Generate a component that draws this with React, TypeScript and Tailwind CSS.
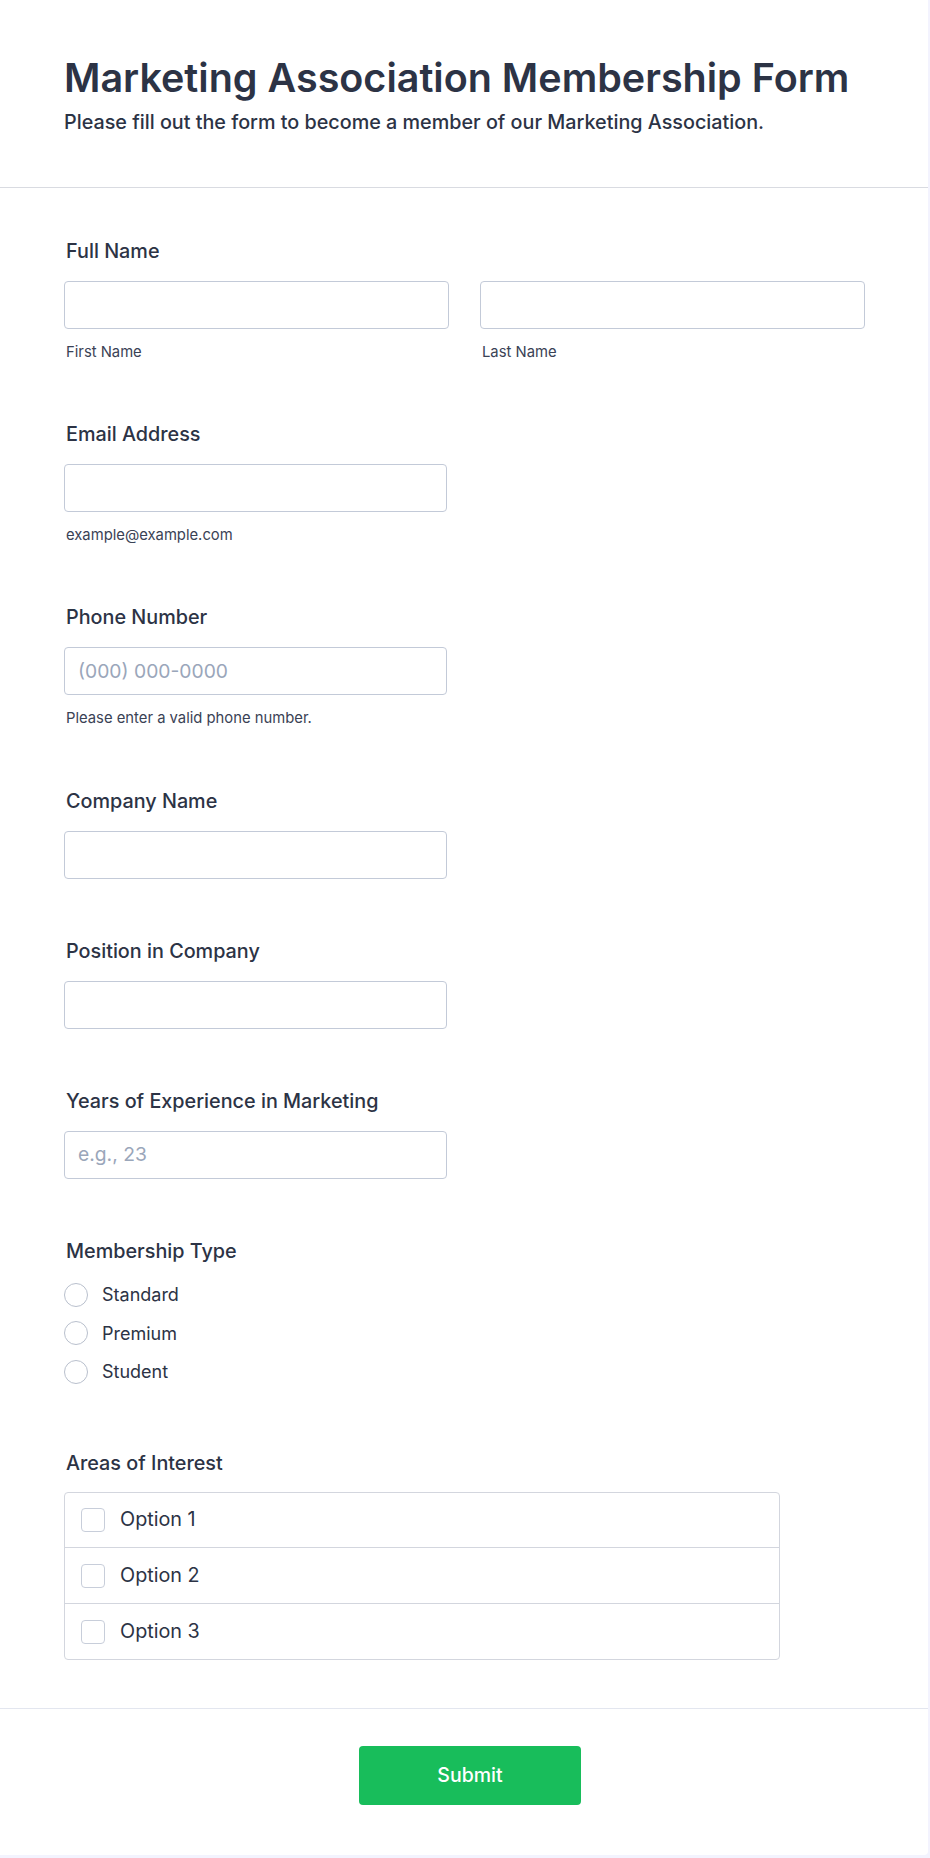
import React from 'react';

const font = { fontFamily: 'Inter, "Noto Sans", sans-serif' };

function Label({ children }: { children: React.ReactNode }) {
  return <div className="h-6 pl-[2px] text-[19.8px] leading-6 font-medium text-[#2c3345]">{children}</div>;
}

function Input({ width, placeholder }: { width: string; placeholder?: string }) {
  return (
    <div className={`${width} h-12 rounded-[4px] border border-[#c3cad8] bg-white flex items-center px-[13px]`}>
      {placeholder && <span className="text-[19.3px] text-[#9aa6ba]">{placeholder}</span>}
    </div>
  );
}

function Sub({ children }: { children: React.ReactNode }) {
  return <div className="mt-[13px] h-5 pl-[2px] text-[14.8px] leading-5 text-[#3a4255]">{children}</div>;
}

function Field({ label, sub, placeholder }: { label: string; sub?: string; placeholder?: string }) {
  return (
    <div>
      <Label>{label}</Label>
      <div className="mt-[18px]">
        <Input width="w-[383px]" placeholder={placeholder} />
      </div>
      {sub && <Sub>{sub}</Sub>}
    </div>
  );
}

export default function App() {
  const radios = ['Standard', 'Premium', 'Student'];
  const options = ['Option 1', 'Option 2', 'Option 3'];

  return (
    <div className="w-[930px] h-[1858px] bg-[#f3f3fe]" style={font}>
      <div className="w-[928px] h-[1855px] bg-white rounded-br-[4px]">
        {/* header */}
        <div className="px-16 pt-[54px] pb-[53px] border-b border-[#d9dbe1]">
          <h1 className="text-[39.5px] leading-[48px] font-semibold text-[#2c3345]">
            Marketing Association Membership Form
          </h1>
          <p className="mt-[8px] text-[19.75px] leading-6 font-medium text-[#2c3345]">
            Please fill out the form to become a member of our Marketing Association.
          </p>
        </div>

        {/* body */}
        <div className="px-16 pt-[51px] pb-[48px] flex flex-col gap-[60.2px]">
          <div>
            <Label>Full Name</Label>
            <div className="mt-[18px] flex gap-[31px]">
              <div>
                <Input width="w-[385px]" />
                <Sub>First Name</Sub>
              </div>
              <div>
                <Input width="w-[385px]" />
                <Sub>Last Name</Sub>
              </div>
            </div>
          </div>

          <Field label="Email Address" sub="example@example.com" />
          <Field label="Phone Number" sub="Please enter a valid phone number." placeholder="(000) 000-0000" />
          <Field label="Company Name" />
          <Field label="Position in Company" />
          <Field label="Years of Experience in Marketing" placeholder="e.g., 23" />

          <div className="pb-[7px]">
            <Label>Membership Type</Label>
            <div className="mt-[19.5px] flex flex-col gap-[14.5px]">
              {radios.map((r) => (
                <div key={r} className="h-6 flex items-center gap-[14px]">
                  <span className="w-6 h-6 rounded-full border border-[#b9c0cd] bg-white" />
                  <span className="text-[18px] text-[#2c3345]">{r}</span>
                </div>
              ))}
            </div>
          </div>

          <div>
            <Label>Areas of Interest</Label>
            <div className="mt-[17px] w-[716px] rounded-[4px] border border-[#d3d6de]">
              {options.map((o, i) => (
                <div
                  key={o}
                  className={`h-[55.5px] flex items-center gap-[15px] pl-4 ${i < 2 ? 'border-b border-[#d3d6de]' : ''}`}
                >
                  <span className="w-6 h-6 rounded-[4px] border border-[#c8ceda] bg-white" />
                  <span className="text-[19.8px] text-[#2c3345]">{o}</span>
                </div>
              ))}
            </div>
          </div>
        </div>

        {/* footer */}
        <div className="border-t border-[#e3e6ef] pt-[37px] pl-[76px] pr-16 flex justify-center">
          <button className="w-[222px] h-[59px] rounded-[4px] bg-[#18bd5b] text-white text-[19.5px] font-medium">
            Submit
          </button>
        </div>
      </div>
    </div>
  );
}
